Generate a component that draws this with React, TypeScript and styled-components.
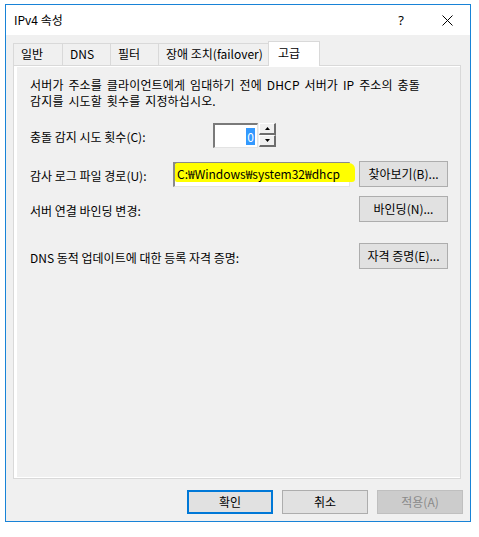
import React from "react";
import styled, { createGlobalStyle } from "styled-components";

const Global = createGlobalStyle`
  html, body { margin: 0; padding: 0; background: #ffffff; }
  body { font-family: "Noto Sans CJK KR", "Noto Sans", sans-serif; font-size: 12px; color: #000; }
  * { box-sizing: border-box; }
`;

const Page = styled.div`
  padding: 4px 0 0 5px;
`;

const Window = styled.div`
  width: 466px;
  height: 518px;
  border: 1px solid #1883d7;
  background: #f0f0f0;
  display: flex;
  flex-direction: column;
`;

const TitleBar = styled.div`
  height: 30px;
  background: #ffffff;
  display: flex;
  align-items: center;
  padding-left: 8px;
`;

const Title = styled.div`
  flex: 1;
  font-size: 12px;
  line-height: 16px;
  padding-bottom: 1px;
`;

const CaptionButton = styled.div`
  width: 46px;
  height: 30px;
  display: flex;
  align-items: center;
  justify-content: center;
  font-family: "Noto Sans", sans-serif;
  font-size: 13px;
  color: #000;
`;

const Body = styled.div`
  flex: 1;
  display: flex;
  flex-direction: column;
  padding: 0 9px 7px 7px;
`;

const TabStrip = styled.div`
  display: flex;
  align-items: flex-end;
  height: 30px;
  padding-top: 6px;
  position: relative;
  z-index: 1;
`;

const Tab = styled.div<{ $w: number; $active?: boolean; $first?: boolean }>`
  width: ${(p) => p.$w}px;
  height: ${(p) => (p.$active ? 25 : 22)}px;
  margin-bottom: ${(p) => (p.$active ? -1 : 0)}px;
  margin-left: ${(p) => (p.$first ? 0 : -1)}px;
  background: ${(p) => (p.$active ? "#ffffff" : "#f0f0f0")};
  border: 1px solid #d9d9d9;
  border-bottom: none;
  display: flex;
  align-items: center;
  padding-left: ${(p) => (p.$active ? 9 : 7)}px;
  padding-bottom: ${(p) => (p.$active ? 3 : 1)}px;
  font-size: 12px;
  line-height: 16px;
  white-space: nowrap;
  position: relative;
  z-index: ${(p) => (p.$active ? 2 : 1)};
`;

const TabPanel = styled.div`
  height: 414px;
  border: 1px solid #d9d9d9;
  background: #ffffff;
  padding: 1px 1px 1px 3px;
  display: flex;
`;

const PageContent = styled.div`
  flex: 1;
  background: #f0f0f0;
  padding: 10px 12px 0 13px;
  display: flex;
  flex-direction: column;
`;

const Paragraph = styled.div`
  font-size: 12px;
  line-height: 16px;
  letter-spacing: 0.15px;
  word-spacing: 2px;
`;

const Row = styled.div<{ $mt: number; $h: number }>`
  display: flex;
  align-items: center;
  margin-top: ${(p) => p.$mt}px;
  height: ${(p) => p.$h}px;
`;

const Label = styled.div<{ $w?: number }>`
  ${(p) => (p.$w ? `width: ${p.$w}px;` : "flex: 1;")}
  font-size: 12px;
  line-height: 16px;
  padding-top: 3px;
  white-space: nowrap;
`;

const Spinner = styled.div`
  display: flex;
  height: 25px;
`;

const SpinEdit = styled.div`
  width: 45px;
  height: 25px;
  background: #ffffff;
  border-top: 2px solid #7a7a7a;
  border-left: 2px solid #7a7a7a;
  border-right: 1px solid #e3e3e3;
  border-bottom: 1px solid #e3e3e3;
  display: flex;
  align-items: center;
  justify-content: flex-end;
  padding-right: 2px;
`;

const Selected = styled.span`
  background: #3399ff;
  color: #ffffff;
  font-size: 12px;
  line-height: 17px;
  padding: 0 1px;
`;

const SpinButtons = styled.div`
  display: flex;
  flex-direction: column;
  margin-left: 1px;
  width: 17px;
`;

const SpinButton = styled.div<{ $h: number }>`
  height: ${(p) => p.$h}px;
  background: #f0f0f0;
  border-top: 1px solid #ffffff;
  border-left: 1px solid #ffffff;
  border-right: 2px solid #6d6d6d;
  border-bottom: 2px solid #6d6d6d;
  display: flex;
  align-items: center;
  justify-content: center;
`;

const PathEdit = styled.div`
  width: 177px;
  height: 25px;
  background: #ffffff;
  border-top: 2px solid #8a8a8a;
  border-left: 2px solid #8a8a8a;
  border-right: 1px solid #e3e3e3;
  border-bottom: 1px solid #e3e3e3;
  display: flex;
  align-items: flex-start;
  padding: 2px 0 0 2px;
  position: relative;
  margin-right: 9px;
`;

const Highlight = styled.div`
  position: absolute;
  left: 0px;
  top: -1px;
  width: 180px;
  height: 19px;
  background: #ffff00;
  border-radius: 2px 6px 3px 2px;
  z-index: 0;
`;

const PathText = styled.span`
  position: relative;
  z-index: 1;
  font-size: 12px;
  line-height: 16px;
  white-space: nowrap;
`;

const ActionButton = styled.div`
  width: 89px;
  height: 26px;
  margin-left: auto;
  background: #e1e1e1;
  border: 1px solid #adadad;
  display: flex;
  align-items: center;
  justify-content: center;
  font-size: 12px;
  line-height: 16px;
  white-space: nowrap;
`;

const Footer = styled.div`
  display: flex;
  justify-content: flex-end;
  gap: 9px;
  margin-top: 11px;
  margin-right: -2px;
`;

const DialogButton = styled.div<{ $variant?: "default" | "disabled" }>`
  width: 86px;
  height: 24px;
  display: flex;
  align-items: center;
  justify-content: center;
  font-size: 12px;
  line-height: 16px;
  background: ${(p) => (p.$variant === "disabled" ? "#cccccc" : "#e1e1e1")};
  color: ${(p) => (p.$variant === "disabled" ? "#8a8a8a" : "#000")};
  border: ${(p) =>
    p.$variant === "default"
      ? "2px solid #0078d7"
      : p.$variant === "disabled"
      ? "1px solid #bfbfbf"
      : "1px solid #adadad"};
`;

const tabs = [
  { label: "일반", w: 50 },
  { label: "DNS", w: 49 },
  { label: "필터", w: 49 },
  { label: "장애 조치(failover)", w: 111 },
  { label: "고급", w: 52, active: true },
];

export default function App() {
  return (
    <>
      <Global />
      <Page>
        <Window>
          <TitleBar>
            <Title>IPv4 속성</Title>
            <CaptionButton>?</CaptionButton>
            <CaptionButton>
              <svg width="11" height="11" viewBox="0 0 11 11">
                <path d="M0.5 0.5 L10.5 10.5 M10.5 0.5 L0.5 10.5" stroke="#000" strokeWidth="1" />
              </svg>
            </CaptionButton>
          </TitleBar>
          <Body>
            <TabStrip>
              {tabs.map((t, i) => (
                <Tab key={t.label} $w={t.w} $active={t.active} $first={i === 0}>
                  {t.label}
                </Tab>
              ))}
            </TabStrip>
            <TabPanel>
              <PageContent>
                <Paragraph>
                  서버가 주소를 클라이언트에게 임대하기 전에 DHCP 서버가 IP 주소의 충돌
                  <br />
                  감지를 시도할 횟수를 지정하십시오.
                </Paragraph>
                <Row $mt={14} $h={25}>
                  <Label $w={183}>충돌 감지 시도 횟수(C):</Label>
                  <Spinner>
                    <SpinEdit>
                      <Selected>0</Selected>
                    </SpinEdit>
                    <SpinButtons>
                      <SpinButton $h={12}>
                        <svg width="5" height="3" viewBox="0 0 5 3">
                          <path d="M2.5 0 L5 3 L0 3 Z" fill="#000" />
                        </svg>
                      </SpinButton>
                      <SpinButton $h={12}>
                        <svg width="5" height="3" viewBox="0 0 5 3">
                          <path d="M0 0 L5 0 L2.5 3 Z" fill="#000" />
                        </svg>
                      </SpinButton>
                    </SpinButtons>
                  </Spinner>
                </Row>
                <Row $mt={13} $h={26}>
                  <Label $w={143}>감사 로그 파일 경로(U):</Label>
                  <PathEdit>
                    <Highlight />
                    <PathText>C:₩Windows₩system32₩dhcp</PathText>
                  </PathEdit>
                  <ActionButton>찾아보기(B)...</ActionButton>
                </Row>
                <Row $mt={9} $h={26}>
                  <Label>서버 연결 바인딩 변경:</Label>
                  <ActionButton>바인딩(N)...</ActionButton>
                </Row>
                <Row $mt={21} $h={26}>
                  <Label>DNS 동적 업데이트에 대한 등록 자격 증명:</Label>
                  <ActionButton>자격 증명(E)...</ActionButton>
                </Row>
              </PageContent>
            </TabPanel>
            <Footer>
              <DialogButton $variant="default">확인</DialogButton>
              <DialogButton>취소</DialogButton>
              <DialogButton $variant="disabled">적용(A)</DialogButton>
            </Footer>
          </Body>
        </Window>
      </Page>
    </>
  );
}
